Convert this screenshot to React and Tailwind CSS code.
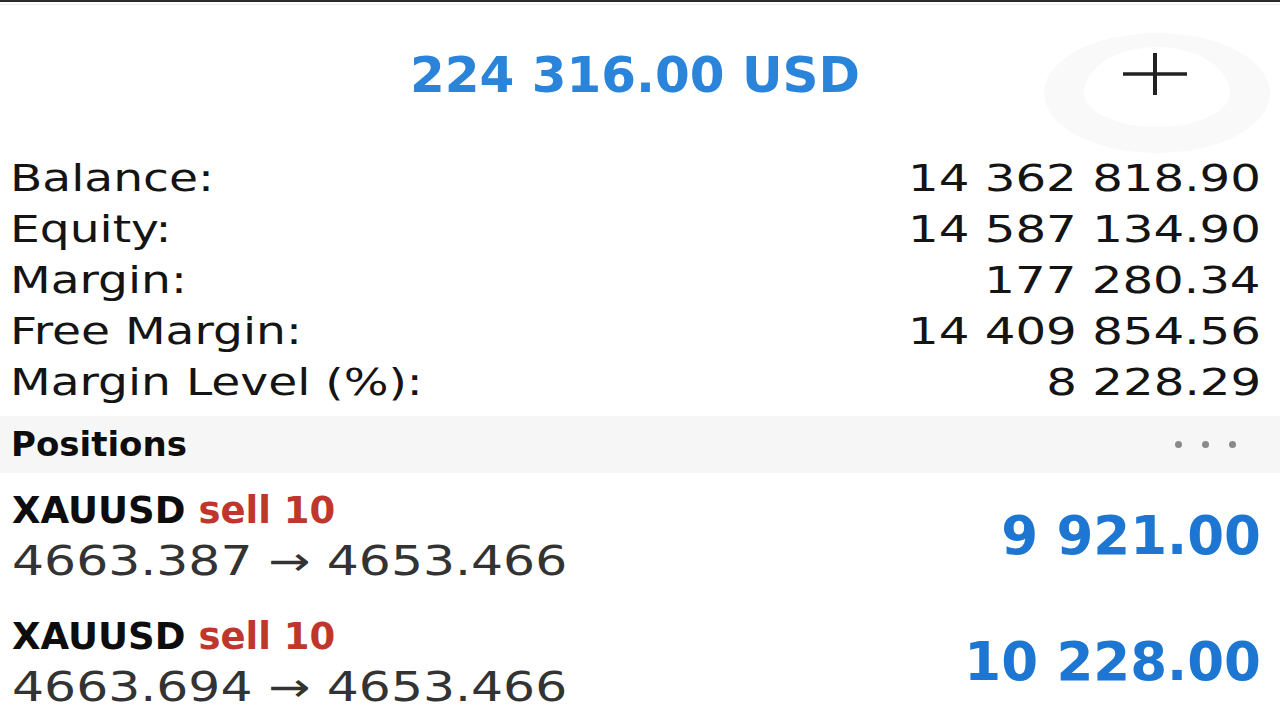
export default function App() {
  const rows = [
    ["Balance:", "14 362 818.90"],
    ["Equity:", "14 587 134.90"],
    ["Margin:", "177 280.34"],
    ["Free Margin:", "14 409 854.56"],
    ["Margin Level (%):", "8 228.29"],
  ];
  const positions = [
    { sym: "XAUUSD", side: "sell 10", from: "4663.387", to: "4653.466", pl: "9 921.00" },
    { sym: "XAUUSD", side: "sell 10", from: "4663.694", to: "4653.466", pl: "10 228.00" },
  ];
  return (
    <div className="relative w-[1280px] h-[720px] overflow-hidden bg-white font-['DejaVu_Sans',sans-serif]">
      <div className="h-[2px] bg-[#2b2b2b]" />
      <div className="h-[2px]" />
      <div className="h-[1px] bg-[#ececec]" />

      <div className="relative h-[148px] flex justify-center items-start pt-[45px] pr-[10px]">
        <span className="text-[50px] leading-[50px] font-bold text-[#2a84da]">224 316.00 USD</span>
        <div className="absolute left-[1044px] top-[28px] w-[226px] h-[120px] rounded-[50%] border-x-[40px] border-t-[14px] border-b-[26px] border-[#f9f9f9]" />
        <svg className="absolute left-[1123px] top-[48px]" width="64" height="42" viewBox="0 0 64 42">
          <line x1="0" y1="21" x2="64" y2="21" stroke="#222" strokeWidth="3.5" />
          <line x1="32" y1="0" x2="32" y2="42" stroke="#222" strokeWidth="4" />
        </svg>
      </div>

      <div className="flex flex-col">
        {rows.map(([l, v]) => (
          <div key={l} className="flex justify-between h-[51px] pl-[10px] pr-[19px] text-[38px] leading-[51px] text-[#141414]">
            <span className="inline-block origin-left scale-x-[1.24] whitespace-nowrap">{l}</span>
            <span className="inline-block origin-right scale-x-[1.27] whitespace-nowrap">{v}</span>
          </div>
        ))}
      </div>

      <div className="mt-[8px] h-[57px] bg-[#f6f6f6] flex items-center justify-between pl-[11px] pr-[44px]">
        <span className="text-[34px] leading-[57px] font-bold text-[#0d0d0d]">Positions</span>
        <div className="flex gap-[20px]">
          <span className="w-[7px] h-[7px] rounded-full bg-[#8a8a8a]" />
          <span className="w-[7px] h-[7px] rounded-full bg-[#8a8a8a]" />
          <span className="w-[7px] h-[7px] rounded-full bg-[#8a8a8a]" />
        </div>
      </div>

      <div className="flex flex-col">
        {positions.map((p, i) => (
          <div key={i} className="flex justify-between items-center py-[13px] pl-[12px] pr-[19px]">
            <div className="flex flex-col">
              <div className="h-[50px] text-[37px] leading-[50px] font-bold whitespace-nowrap">
                <span className="text-[#0d0d0d]">{p.sym}</span>{" "}
                <span className="text-[#c0362c]">{p.side}</span>
              </div>
              <div className="h-[50px] text-[40px] leading-[50px] text-[#333]">
                <span className="inline-block origin-left scale-x-[1.26] whitespace-nowrap">
                  {p.from} → {p.to}
                </span>
              </div>
            </div>
            <span className="text-[53px] leading-[52px] font-bold text-[#1c76d2] whitespace-nowrap">{p.pl}</span>
          </div>
        ))}
      </div>
    </div>
  );
}
